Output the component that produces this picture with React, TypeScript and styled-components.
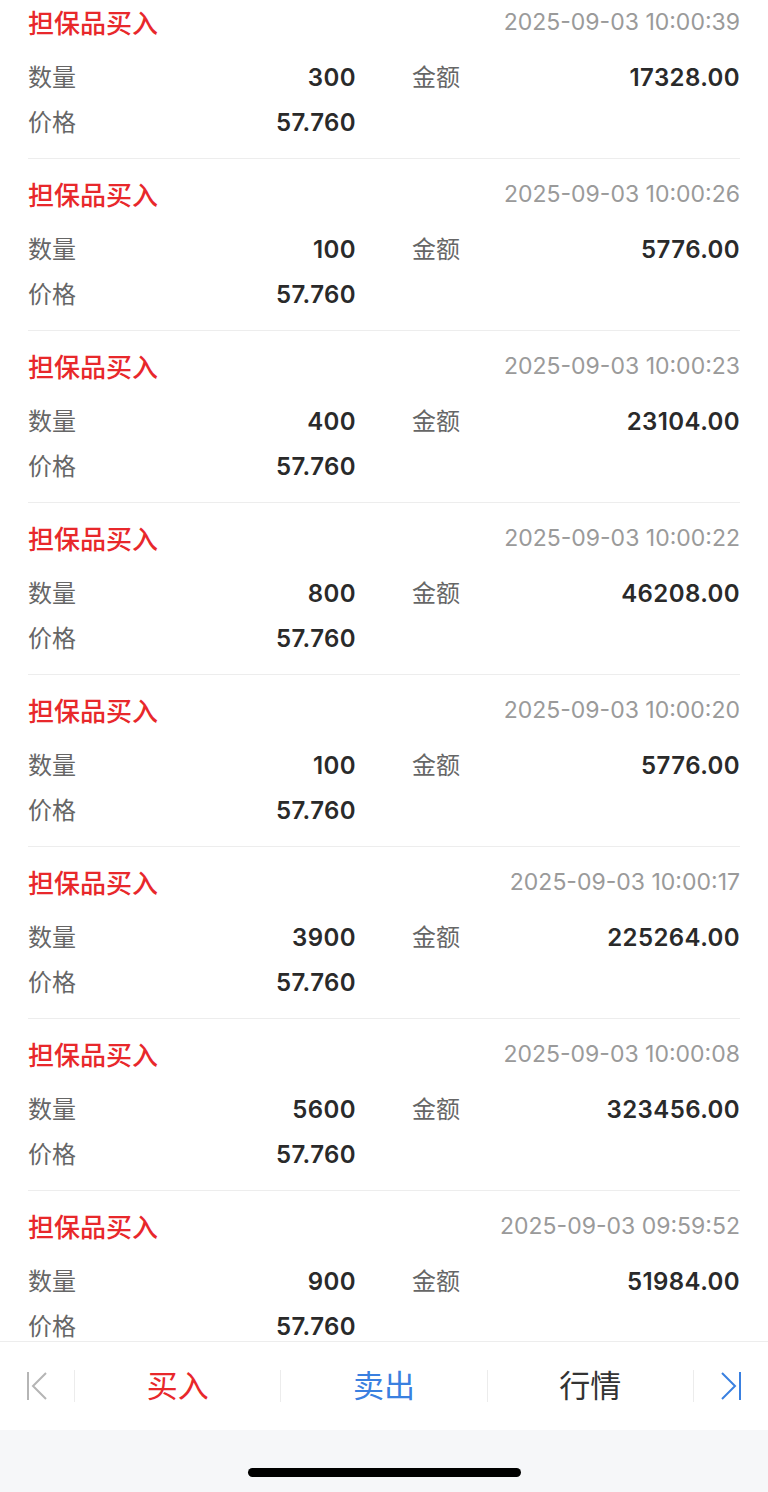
import React from 'react';
import styled, { createGlobalStyle } from 'styled-components';

type Trade = {
  time: string;
  qty: string;
  amount: string;
  price: string;
};

const trades: Trade[] = [
  { time: '2025-09-03 10:00:39', qty: '300', amount: '17328.00', price: '57.760' },
  { time: '2025-09-03 10:00:26', qty: '100', amount: '5776.00', price: '57.760' },
  { time: '2025-09-03 10:00:23', qty: '400', amount: '23104.00', price: '57.760' },
  { time: '2025-09-03 10:00:22', qty: '800', amount: '46208.00', price: '57.760' },
  { time: '2025-09-03 10:00:20', qty: '100', amount: '5776.00', price: '57.760' },
  { time: '2025-09-03 10:00:17', qty: '3900', amount: '225264.00', price: '57.760' },
  { time: '2025-09-03 10:00:08', qty: '5600', amount: '323456.00', price: '57.760' },
  { time: '2025-09-03 09:59:52', qty: '900', amount: '51984.00', price: '57.760' },
];

const GlobalStyle = createGlobalStyle`
  html, body {
    margin: 0;
    padding: 0;
    background: #fff;
  }
  body {
    font-family: Inter, "Noto Sans CJK SC", sans-serif;
    -webkit-font-smoothing: antialiased;
  }
`;

function App() {
  return (
    <Page>
      <GlobalStyle />
      <ListViewport>
        <List>
          {trades.map((t) => (
            <Item key={t.time}>
              <ItemHead>
                <Title>担保品买入</Title>
                <Time>{t.time}</Time>
              </ItemHead>
              <Grid>
                <Pair>
                  <Label>数量</Label>
                  <Value>{t.qty}</Value>
                </Pair>
                <Pair>
                  <Label>金额</Label>
                  <Value>{t.amount}</Value>
                </Pair>
                <Pair>
                  <Label>价格</Label>
                  <Value>{t.price}</Value>
                </Pair>
              </Grid>
            </Item>
          ))}
        </List>
      </ListViewport>
      <TabBar>
        <EdgeCell>
          <svg width="22" height="30" viewBox="0 0 22 30">
            <path d="M2 1v28M20 2L7 15l13 13" fill="none" stroke="#b5b5b5" strokeWidth="2" />
          </svg>
        </EdgeCell>
        <Tab $color="#e8282b">买入</Tab>
        <Tab $color="#3a80e0">卖出</Tab>
        <Tab $color="#333">行情</Tab>
        <EdgeCell $last>
          <svg width="22" height="30" viewBox="0 0 22 30">
            <path d="M20 1v28M2 2l13 13L2 28" fill="none" stroke="#3a80e0" strokeWidth="2" />
          </svg>
        </EdgeCell>
      </TabBar>
      <HomeArea>
        <HomeIndicator />
      </HomeArea>
    </Page>
  );
}

export default App;

const Page = styled.div`
  width: 768px;
  height: 1492px;
  display: flex;
  flex-direction: column;
  background: #fff;
`;

const ListViewport = styled.div`
  flex: 1;
  overflow: hidden;
`;

const List = styled.div`
  margin-top: -13px;
  padding: 0 28px;
`;

const Item = styled.div`
  padding: 22px 0 13px;
  border-bottom: 1px solid #ededed;
`;

const ItemHead = styled.div`
  display: flex;
  justify-content: space-between;
  align-items: center;
  height: 28px;
  margin-bottom: 18px;
`;

const Title = styled.div`
  color: #e8282b;
  font-size: 26px;
  font-weight: 500;
  margin-top: -4px;
`;

const Time = styled.div`
  color: #9a9a9a;
  font-size: 23px;
  margin-top: -2px;
`;

const Grid = styled.div`
  display: grid;
  grid-template-columns: 1fr 1fr;
  column-gap: 56px;
  grid-auto-rows: 45px;
`;

const Pair = styled.div`
  display: flex;
  justify-content: space-between;
  align-items: center;
`;

const Label = styled.div`
  color: #666;
  font-size: 24px;
  margin-top: -5px;
`;

const Value = styled.div`
  color: #2a2a2a;
  font-size: 24px;
  font-weight: 600;
  letter-spacing: 0.4px;
`;

const TabBar = styled.div`
  height: 88px;
  flex-shrink: 0;
  border-top: 1px solid #ededed;
  display: grid;
  grid-template-columns: 75px 1fr 1fr 1fr 74px;
  align-items: center;
`;

const EdgeCell = styled.div<{ $last?: boolean }>`
  height: 32px;
  display: flex;
  align-items: center;
  justify-content: center;
  border-right: ${(p) => (p.$last ? 'none' : '1px solid #ececec')};
`;

const Tab = styled.div<{ $color: string }>`
  height: 32px;
  line-height: 32px;
  text-align: center;
  color: ${(p) => p.$color};
  font-size: 31px;
  border-right: 1px solid #ececec;
`;

const HomeArea = styled.div`
  height: 62px;
  flex-shrink: 0;
  background: #f6f7f9;
  display: flex;
  justify-content: center;
  padding-top: 38px;
  box-sizing: border-box;
`;

const HomeIndicator = styled.div`
  width: 273px;
  height: 9px;
  border-radius: 5px;
  background: #000;
`;
